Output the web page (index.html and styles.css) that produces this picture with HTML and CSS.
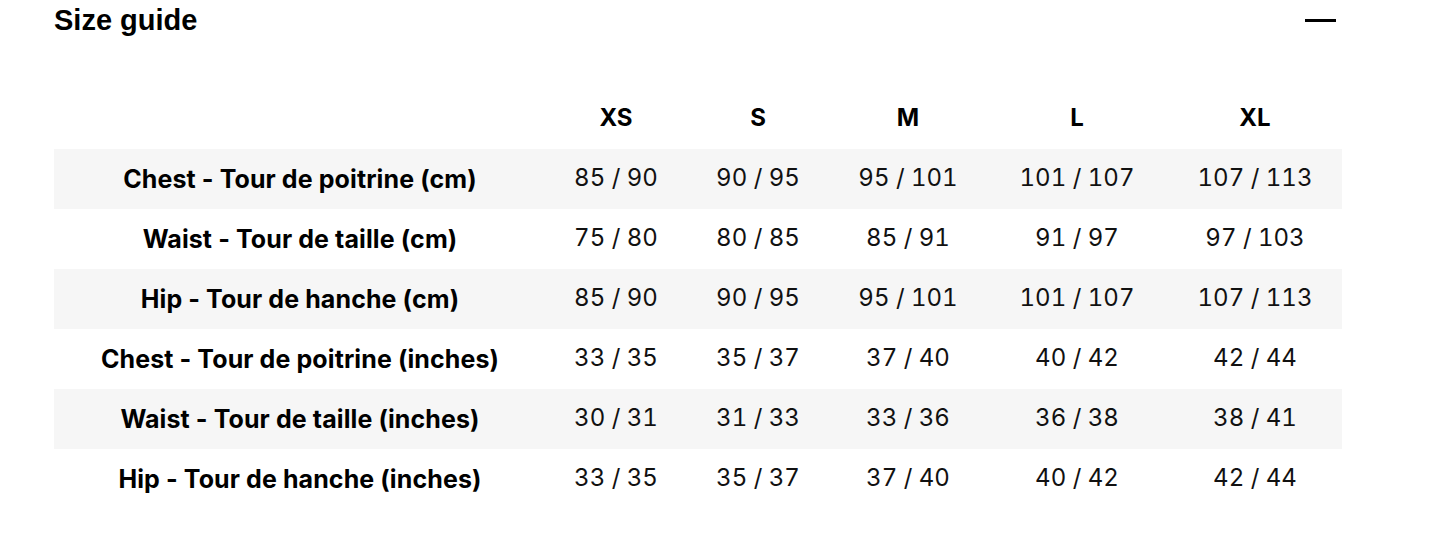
FILE: index.html
```html
<!DOCTYPE html>
<html>
<head>
<meta charset="utf-8">
<link rel="stylesheet" href="styles.css">
</head>
<body>
<section class="guide">
  <div class="guide-head">
    <h2 class="guide-title">Size guide</h2>
    <span class="guide-toggle" aria-hidden="true"></span>
  </div>
  <table class="sizes">
    <colgroup>
      <col class="c-label"><col class="c-xs"><col class="c-s"><col class="c-m"><col class="c-l"><col class="c-xl">
    </colgroup>
    <thead>
      <tr><th></th><th>XS</th><th>S</th><th>M</th><th>L</th><th>XL</th></tr>
    </thead>
    <tbody>
      <tr><th>Chest - Tour de poitrine (cm)</th><td>85 / 90</td><td>90 / 95</td><td>95 / 101</td><td>101 / 107</td><td>107 / 113</td></tr>
      <tr><th>Waist - Tour de taille (cm)</th><td>75 / 80</td><td>80 / 85</td><td>85 / 91</td><td>91 / 97</td><td>97 / 103</td></tr>
      <tr><th>Hip - Tour de hanche (cm)</th><td>85 / 90</td><td>90 / 95</td><td>95 / 101</td><td>101 / 107</td><td>107 / 113</td></tr>
      <tr><th>Chest - Tour de poitrine (inches)</th><td>33 / 35</td><td>35 / 37</td><td>37 / 40</td><td>40 / 42</td><td>42 / 44</td></tr>
      <tr><th>Waist - Tour de taille (inches)</th><td>30 / 31</td><td>31 / 33</td><td>33 / 36</td><td>36 / 38</td><td>38 / 41</td></tr>
      <tr><th>Hip - Tour de hanche (inches)</th><td>33 / 35</td><td>35 / 37</td><td>37 / 40</td><td>40 / 42</td><td>42 / 44</td></tr>
    </tbody>
  </table>
</section>
</body>
</html>
```
FILE: styles.css
```css
* { box-sizing: border-box; }
body {
  margin: 0;
  background: #fff;
  color: #111;
  font-family: Inter, "Liberation Sans", sans-serif;
}
.guide {
  width: 1288px;
  margin-left: 54px;
}
.guide-head {
  display: flex;
  justify-content: space-between;
  align-items: center;
  height: 40px;
}
.guide-title {
  margin: 0;
  font-family: "Liberation Sans", Arial, sans-serif;
  font-weight: 700;
  font-size: 29px;
  line-height: 36px;
  color: #000;
}
.guide-toggle {
  display: block;
  width: 31px;
  height: 3px;
  background: #000;
  margin-right: 6px;
}
.sizes {
  margin-top: 49px;
  width: 1288px;
  border-collapse: collapse;
  table-layout: fixed;
  font-size: 24px;
}
.c-label { width: 492px; }
.c-xs { width: 140px; }
.c-s { width: 144px; }
.c-m { width: 156px; }
.c-l { width: 182px; }
.c-xl { width: 174px; }
.sizes th, .sizes td {
  height: 60px;
  padding: 0;
  text-align: center;
  vertical-align: middle;
  white-space: nowrap;
}
.sizes th { font-weight: 700; color: #000; }
.sizes tbody th { font-size: 25px; letter-spacing: 0.1px; }
.sizes td {
  font-weight: 400;
  color: #111;
  padding-bottom: 3px;
  font-variant-numeric: tabular-nums;
}
.sizes thead th { height: 60px; padding-bottom: 4px; }
.sizes tbody tr:nth-child(odd) { background: #f6f6f6; }
```
